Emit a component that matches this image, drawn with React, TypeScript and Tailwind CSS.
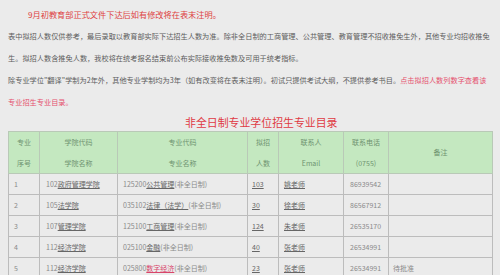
const cjk = { fontFamily: '"Noto Sans CJK SC", "Noto Sans", sans-serif' };

type Row = {
  no: string;
  collegeCode: string;
  college: string;
  majorCode: string;
  major: string;
  majorRed?: boolean;
  quota: string;
  contact: string;
  phone: string;
  note?: string;
};

const rows: Row[] = [
  { no: '1', collegeCode: '102', college: '政府管理学院', majorCode: '125200', major: '公共管理', quota: '103', contact: '姚老师', phone: '86939542' },
  { no: '2', collegeCode: '105', college: '法学院', majorCode: '035102', major: '法律（法学）', quota: '30', contact: '徐老师', phone: '86567912' },
  { no: '3', collegeCode: '107', college: '管理学院', majorCode: '125100', major: '工商管理', quota: '124', contact: '朱老师', phone: '26535170' },
  { no: '4', collegeCode: '112', college: '经济学院', majorCode: '025100', major: '金融', quota: '40', contact: '张老师', phone: '26534991' },
  { no: '5', collegeCode: '112', college: '经济学院', majorCode: '025800', major: '数字经济', majorRed: true, quota: '23', contact: '张老师', phone: '26534991', note: '待批准' },
];

function HeadCell({ top, bottom, className = '' }: { top: string; bottom?: string; className?: string }) {
  return (
    <th className={`border border-[#b9c9b7] font-normal text-center align-middle text-[#6f9370] ${className}`}>
      <div className="leading-[20.5px]">{top}</div>
      {bottom && <div className="leading-[20.5px]">{bottom}</div>}
    </th>
  );
}

export default function App() {
  return (
    <div className="w-[500px] h-[275px] overflow-hidden bg-[#ebebeb] px-2 pt-[3px] text-[7.2px] text-[#5c5c5c]" style={cjk}>
      <div className="leading-[22px] whitespace-nowrap">
        <div className="pl-5 text-[8.2px] text-[#de3f3f]">9月初教育部正式文件下达后如有修改将在表末注明。</div>
        <div>表中拟招人数仅供参考，最后录取以教育部实际下达招生人数为准。除非全日制的工商管理、公共管理、教育管理不招收推免生外，其他专业均招收推免</div>
        <div>生。拟招人数含推免人数，我校将在统考报名结束前公布实际接收推免数及可用于统考指标。</div>
        <div>
          除专业学位"翻译"学制为2年外，其他专业学制均为3年（如有改变将在表末注明）。初试只提供考试大纲，不提供参考书目。
          <span className="text-[#e5506e]">点击拟招人数列数字查看该</span>
        </div>
        <div className="text-[#e5506e]">专业招生专业目录。</div>
      </div>

      <div className="pl-[177px] h-[18px] leading-[18px] text-[10.9px] text-[#e03a44] whitespace-nowrap">非全日制专业学位招生专业目录</div>

      <table className="w-[484px] table-fixed border-collapse text-[7px] whitespace-nowrap">
        <colgroup>
          <col className="w-[31px]" />
          <col className="w-[78px]" />
          <col className="w-[130px]" />
          <col className="w-[31px]" />
          <col className="w-[65px]" />
          <col className="w-[45px]" />
          <col className="w-[104px]" />
        </colgroup>
        <thead>
          <tr className="bg-[#c4e8c0] h-[41px]">
            <HeadCell top="专业" bottom="序号" />
            <HeadCell top="学院代码" bottom="学院名称" />
            <HeadCell top="专业代码" bottom="专业名称" />
            <HeadCell top="拟招" bottom="人数" />
            <HeadCell top="联系人" bottom="Email" />
            <HeadCell top="联系电话" bottom="(0755)" />
            <HeadCell top="备注" />
          </tr>
        </thead>
        <tbody className="text-[#8a8a8a]">
          {rows.map((r) => (
            <tr key={r.no} className="h-[21px]">
              <td className="border border-[#bcbcbc] pl-[5px]">{r.no}</td>
              <td className="border border-[#bcbcbc] pl-[6px]">
                {r.collegeCode}
                <span className="underline text-[#666]">{r.college}</span>
              </td>
              <td className="border border-[#bcbcbc] pl-[5px]">
                {r.majorCode}
                <span className={`underline ${r.majorRed ? 'text-[#d8456a]' : 'text-[#666]'}`}>{r.major}</span>
                (非全日制)
              </td>
              <td className="border border-[#bcbcbc] pl-[4px]">
                <span className="underline text-[#666]">{r.quota}</span>
              </td>
              <td className="border border-[#bcbcbc] pl-[5px]">
                <span className="underline text-[#666]">{r.contact}</span>
              </td>
              <td className="border border-[#bcbcbc] pl-[6px]">{r.phone}</td>
              <td className="border border-[#bcbcbc] pl-[4px]">{r.note}</td>
            </tr>
          ))}
        </tbody>
      </table>
    </div>
  );
}
